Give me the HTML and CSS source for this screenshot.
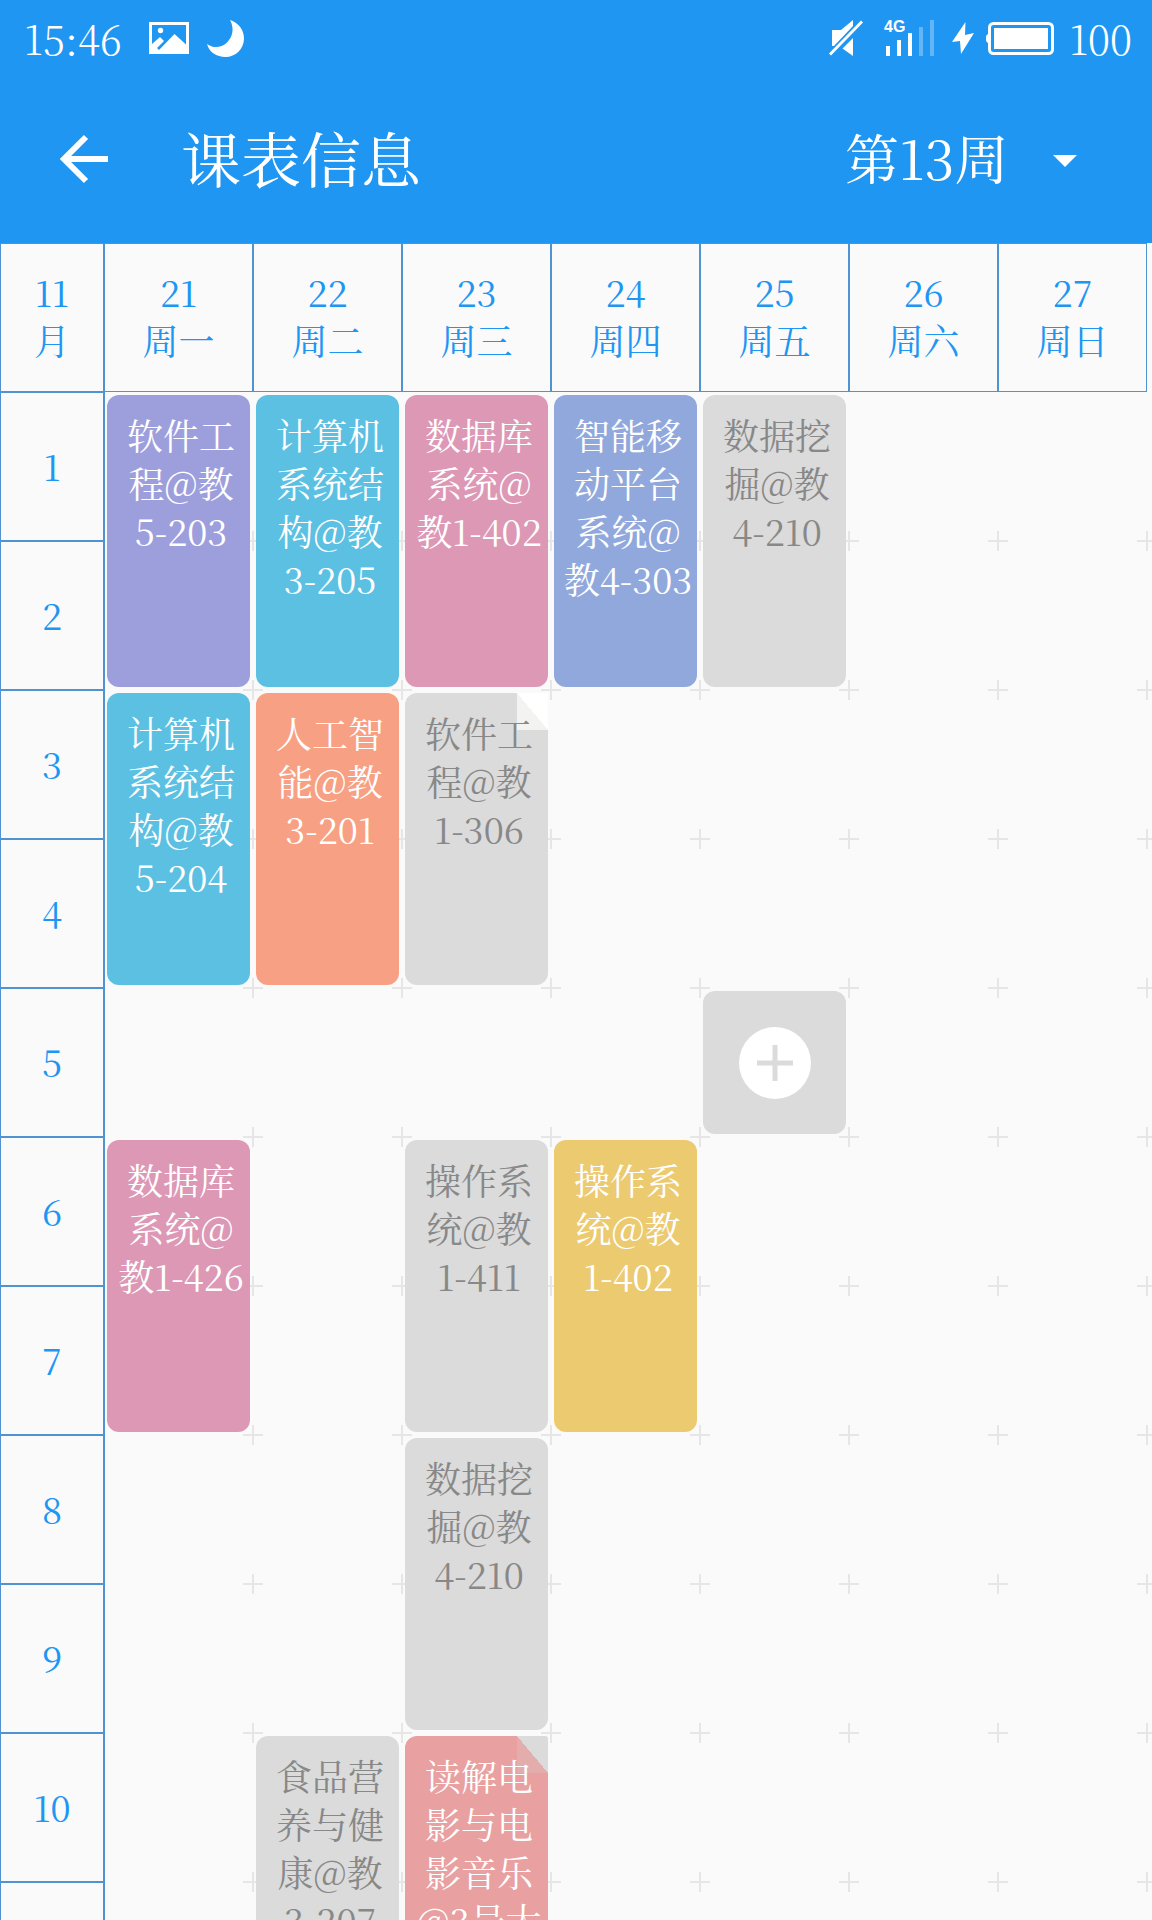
FILE: index.html
```html
<!DOCTYPE html>
<html lang="zh-CN">
<head>
<meta charset="utf-8">
<meta name="viewport" content="width=device-width, initial-scale=1">
<title>课表信息</title>
<link rel="stylesheet" href="styles.css">
</head>
<body>
<header class="top">
  <div class="status">
    <div class="status-group status-left">
      <time>15:46</time>
      <svg class="icon-picture" width="40" height="32" viewBox="0 0 40 32" aria-hidden="true"><path fill="#fff" fill-rule="evenodd" d="M0 0H40V32H0ZM3 3V22L11 15L15 19L8 26L10 28L25.500 12L37 22.500V3Z"/><circle cx="11.500" cy="8.500" r="2.700" fill="#fff"/></svg>
      <svg width="37" height="37" viewBox="0 0 37 37" aria-hidden="true"><path fill="#fff" d="M23 0C32 3 37 10 37 18.500C37 29 28.500 37 18.500 37C9.500 37 2 32 0 24C6 28.500 14 28 19.500 23C26 17 27.500 8 23 0Z"/></svg>
    </div>
    <div class="status-group status-right">
      <svg width="34" height="36" viewBox="0 0 34 36" aria-hidden="true"><path fill="#fff" d="M3 10H12L24 0V6L5 26H3ZM24 18V36L13.500 28.500Z"/><path stroke="#fff" stroke-width="2.800" d="M1 34.500L33 1.500"/></svg>
      <svg class="icon-signal" width="50" height="36" viewBox="0 0 50 36" aria-hidden="true"><text x="0" y="12" class="signal-label">4G</text><path fill="#fff" d="M2 26h4v10H2zM13 20h4v16H13zM24 13h4v23H24z"/><path fill="#fff" opacity=".3" d="M35 7h4v29H35zM46 0h4v36H46z"/></svg>
      <svg width="22" height="32" viewBox="0 0 22 32" aria-hidden="true"><path fill="#fff" d="M13.500 0L0 20L8 19L9 32L22 11L13 13Z"/></svg>
      <svg class="icon-battery" width="68" height="33" viewBox="0 0 68 33" aria-hidden="true"><rect x="3.500" y="1.500" width="63" height="30" rx="4" fill="none" stroke="#fff" stroke-width="3"/><path fill="#fff" d="M8 6H62V27H8ZM2 12V21Q0 20 0 18V15Q0 13 2 12Z"/></svg>
      <span>100</span>
    </div>
  </div>
  <div class="bar">
    <button class="back" type="button" aria-label="返回"><svg width="50" height="50" viewBox="0 0 50 50" aria-hidden="true"><path fill="none" stroke="#fff" stroke-width="6" d="M49 25H5M27 3L5 25L27 47"/></svg></button>
    <h1>课表信息</h1>
    <div class="week">
      <select aria-label="周次">
        <option>第12周</option>
        <option selected>第13周</option>
        <option>第14周</option>
      </select>
      <svg class="caret" width="24" height="12" viewBox="0 0 24 12" aria-hidden="true"><path fill="#fff" d="M0 0H24L12 12Z"/></svg>
    </div>
  </div>
</header>
<main class="schedule">
  <table>
    <thead>
      <tr>
        <th class="period" scope="col">11<br>月</th>
        <th scope="col">21<br>周一</th>
        <th scope="col">22<br>周二</th>
        <th scope="col">23<br>周三</th>
        <th scope="col">24<br>周四</th>
        <th scope="col">25<br>周五</th>
        <th scope="col">26<br>周六</th>
        <th scope="col">27<br>周日</th>
      </tr>
    </thead>
    <tbody>
      <tr>
        <th scope="row">1</th>
        <td rowspan="2"><div class="card violet">软件工<br>程@教<br>5-203</div></td>
        <td rowspan="2"><div class="card cyan">计算机<br>系统结<br>构@教<br>3-205</div></td>
        <td rowspan="2"><div class="card pink">数据库<br>系统@<br>教1-402</div></td>
        <td rowspan="2"><div class="card blue">智能移<br>动平台<br>系统@<br>教4-303</div></td>
        <td rowspan="2"><div class="card idle">数据挖<br>掘@教<br>4-210</div></td>
        <td></td><td></td>
      </tr>
      <tr><th scope="row">2</th><td></td><td></td></tr>
      <tr>
        <th scope="row">3</th>
        <td rowspan="2"><div class="card cyan">计算机<br>系统结<br>构@教<br>5-204</div></td>
        <td rowspan="2"><div class="card orange">人工智<br>能@教<br>3-201</div></td>
        <td rowspan="2"><div class="card idle fold-white">软件工<br>程@教<br>1-306</div></td>
        <td></td><td></td><td></td><td></td>
      </tr>
      <tr><th scope="row">4</th><td></td><td></td><td></td><td></td></tr>
      <tr>
        <th scope="row">5</th>
        <td></td><td></td><td></td><td></td>
        <td><button class="card add" type="button" aria-label="添加课程"><svg width="72" height="72" viewBox="0 0 72 72" aria-hidden="true"><circle cx="36" cy="36" r="36" fill="#fff"/><path stroke="#dbdbdb" stroke-width="5" d="M36 18V54M18 36H54"/></svg></button></td>
        <td></td><td></td>
      </tr>
      <tr>
        <th scope="row">6</th>
        <td rowspan="2"><div class="card pink">数据库<br>系统@<br>教1-426</div></td>
        <td></td>
        <td rowspan="2"><div class="card idle">操作系<br>统@教<br>1-411</div></td>
        <td rowspan="2"><div class="card yellow">操作系<br>统@教<br>1-402</div></td>
        <td></td><td></td><td></td>
      </tr>
      <tr><th scope="row">7</th><td></td><td></td><td></td><td></td></tr>
      <tr>
        <th scope="row">8</th>
        <td></td><td></td>
        <td rowspan="2"><div class="card idle">数据挖<br>掘@教<br>4-210</div></td>
        <td></td><td></td><td></td><td></td>
      </tr>
      <tr><th scope="row">9</th><td></td><td></td><td></td><td></td><td></td><td></td></tr>
      <tr>
        <th scope="row">10</th>
        <td></td>
        <td rowspan="2"><div class="card idle">食品营<br>养与健<br>康@教<br>3-207</div></td>
        <td rowspan="2"><div class="card red fold-gray">读解电<br>影与电<br>影音乐<br>@3号大</div></td>
        <td></td><td></td><td></td><td></td>
      </tr>
      <tr><th scope="row"></th><td></td><td></td><td></td><td></td><td></td></tr>
    </tbody>
  </table>
</main>
</body>
</html>
```

FILE: styles.css
```css
:root {
  --primary: #2096f3;
  --line: #4f93d0;
  --paper: #fafafa;
  --idle: #dbdbdb;
  --period: 104px;
  --edge: 5px;
  --row: 149px;
  --col: calc((100vw - var(--period) - var(--edge)) / 7);
}

* {
  box-sizing: border-box;
}

body {
  display: flex;
  flex-direction: column;
  height: 100vh;
  margin: 0;
  background: var(--paper);
  font-family: "Noto Serif CJK SC", "Liberation Serif", "Noto Sans CJK SC", serif;
  font-weight: 400;
}

svg {
  display: block;
}

button,
select {
  padding: 0;
  border: 0;
  background: none;
  color: inherit;
  font: inherit;
}

/* Status line and title bar */
.top {
  flex: none;
  background: var(--primary);
  color: #fff;
}

.status {
  display: flex;
  justify-content: space-between;
  height: 76px;
  padding: 0 20px 0 24px;
  font-size: 40px;
  font-weight: 300;
  line-height: 80px;
}

.status-group {
  display: flex;
  align-items: center;
}

.status-left {
  gap: 18px;
}

.status-left time {
  min-width: 107px;
}

.status-right {
  gap: 18px;
}

.icon-signal {
  margin-left: 3px;
  overflow: visible;
}

.icon-battery {
  margin: 0 -3px 0 -6px;
}

.signal-label {
  fill: #fff;
  font: 700 16px "Liberation Sans", sans-serif;
}

.bar {
  display: flex;
  align-items: center;
  height: 167px;
  padding: 0 75px 2px 59px;
}

.back {
  margin-right: 72px;
}

h1 {
  margin: 0;
  padding-bottom: 4px;
  font-size: 60px;
  font-weight: 400;
  line-height: 80px;
}

.week {
  position: relative;
  margin-left: auto;
}

.week select {
  display: block;
  appearance: none;
  padding: 0 68px 4px 0;
  font-size: 54px;
  line-height: 80px;
}

.week option {
  color: #333;
}

.caret {
  position: absolute;
  top: calc(50% - 4px);
  right: 0;
  pointer-events: none;
}

/* Timetable */
.schedule {
  flex: 1;
  min-height: 0;
  overflow-y: auto;
  scrollbar-width: none;
  padding-right: var(--edge);
}

.schedule::-webkit-scrollbar {
  display: none;
}

table {
  table-layout: fixed;
  width: 100%;
  border-spacing: 0;
  font-size: 36px;
  line-height: 48px;
}

th {
  height: var(--row);
  padding: 0 0 4px;
  border: 1px solid var(--line);
  color: var(--primary);
  font-weight: 400;
}

.period {
  width: var(--period);
}

tbody th {
  padding-bottom: 2px;
  box-shadow: 1px 0 0 var(--line);
}

/* Grey crosses where the cells meet */
tbody {
  position: relative;
}

tbody::before {
  content: "";
  position: absolute;
  top: calc(var(--row) - 10px);
  bottom: 0;
  left: calc(var(--period) + var(--col) - 10px);
  width: calc(var(--col) * 6 + 10px + var(--edge));
  background: url("data:image/svg+xml,%3Csvg xmlns='http://www.w3.org/2000/svg'%3E%3Cpath d='M10 0V20M0 10H20' stroke='%23e6e6e6' stroke-width='2'/%3E%3C/svg%3E") 0 0 / var(--col) var(--row);
}

td {
  height: var(--row);
  padding: 3px;
  vertical-align: top;
}

.card {
  position: relative;
  z-index: 1;
  width: 100%;
  height: calc(var(--row) * 2 - 6px);
  padding: 16px 0 0 5px;
  border-radius: 12px;
  color: #fff;
  text-align: center;
  white-space: nowrap;
}

.violet { background-color: #9d9edc; }
.cyan { background-color: #5bc0e2; }
.pink { background-color: #dc98b5; }
.blue { background-color: #91a8dd; }
.orange { background-color: #f7a083; }
.yellow { background-color: #ecca70; }
.red { background-color: #e8a0a0; }

.idle {
  background-color: var(--idle);
  color: #888;
}

/* Turned corner: another course shares the slot */
.fold-white,
.fold-gray {
  background-position: top right;
  background-repeat: no-repeat;
  background-size: 31px 37px;
}

.fold-white {
  border-top-right-radius: 0;
  background-image: linear-gradient(to top right, #f3f3f2 50%, #fff 50%);
}

.fold-gray {
  border-top-right-radius: 3px;
  background-image: linear-gradient(to top right, #e4adad 50%, var(--idle) 50%);
}

.add {
  display: flex;
  align-items: center;
  justify-content: center;
  height: calc(var(--row) - 6px);
  padding: 0;
  background-color: var(--idle);
}
```
